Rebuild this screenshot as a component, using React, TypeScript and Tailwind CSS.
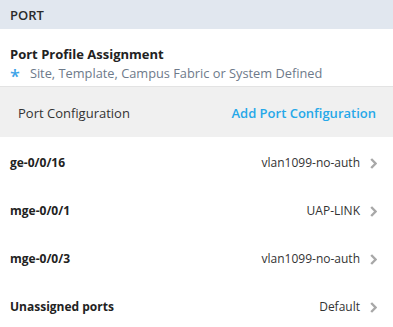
const rows = [
  { name: "ge-0/0/16", value: "vlan1099-no-auth" },
  { name: "mge-0/0/1", value: "UAP-LINK" },
  { name: "mge-0/0/3", value: "vlan1099-no-auth" },
  { name: "Unassigned ports", value: "Default" },
]

const Chevron = () => (
  <svg width="7" height="11" viewBox="0 0 7 11" className="ml-[10px]">
    <path d="M1.2 1 L5.6 5.5 L1.2 10" fill="none" stroke="#a8a8a8" strokeWidth="2.4" />
  </svg>
)

export default function App() {
  return (
    <div className="w-[393px] h-[327px] overflow-hidden bg-white font-['Open_Sans',sans-serif] text-[#333]">
      <div className="h-[29px] bg-[#e1e7ef] flex items-center pt-[2px] px-[10px] text-[13px] font-semibold text-[#2b2b2b]">
        PORT
      </div>
      <div className="h-[58px] border-b border-[#e3e3e3] px-[10px] pt-[15px]">
        <div className="text-[13px] font-bold leading-[20px] text-[#222]">Port Profile Assignment</div>
        <div className="h-[18px] text-[13px] leading-[18px] text-[#6e7a8a] flex items-center">
          <span className="text-[#3da3e8] text-[18px] leading-[18px] translate-y-[3px] mr-[10px] font-semibold">*</span>
          <span className="text-[12.8px]">Site, Template, Campus Fabric or System Defined</span>
        </div>
      </div>
      <div className="h-[50px] bg-[#f0f0f0] flex items-center justify-between pt-[4px] pl-[18px] pr-[17px]">
        <span className="text-[13px]">Port Configuration</span>
        <span className="text-[13px] font-semibold text-[#26a8e9]">Add Port Configuration</span>
      </div>
      {rows.map((r) => (
        <div key={r.name} className="h-[48px] flex items-center justify-between pt-[4px] pl-[10px] pr-[16px]">
          <span className="text-[12px] font-bold text-[#222]">{r.name}</span>
          <span className="flex items-center text-[12px] text-[#333]">
            {r.value}
            <Chevron />
          </span>
        </div>
      ))}
    </div>
  )
}
